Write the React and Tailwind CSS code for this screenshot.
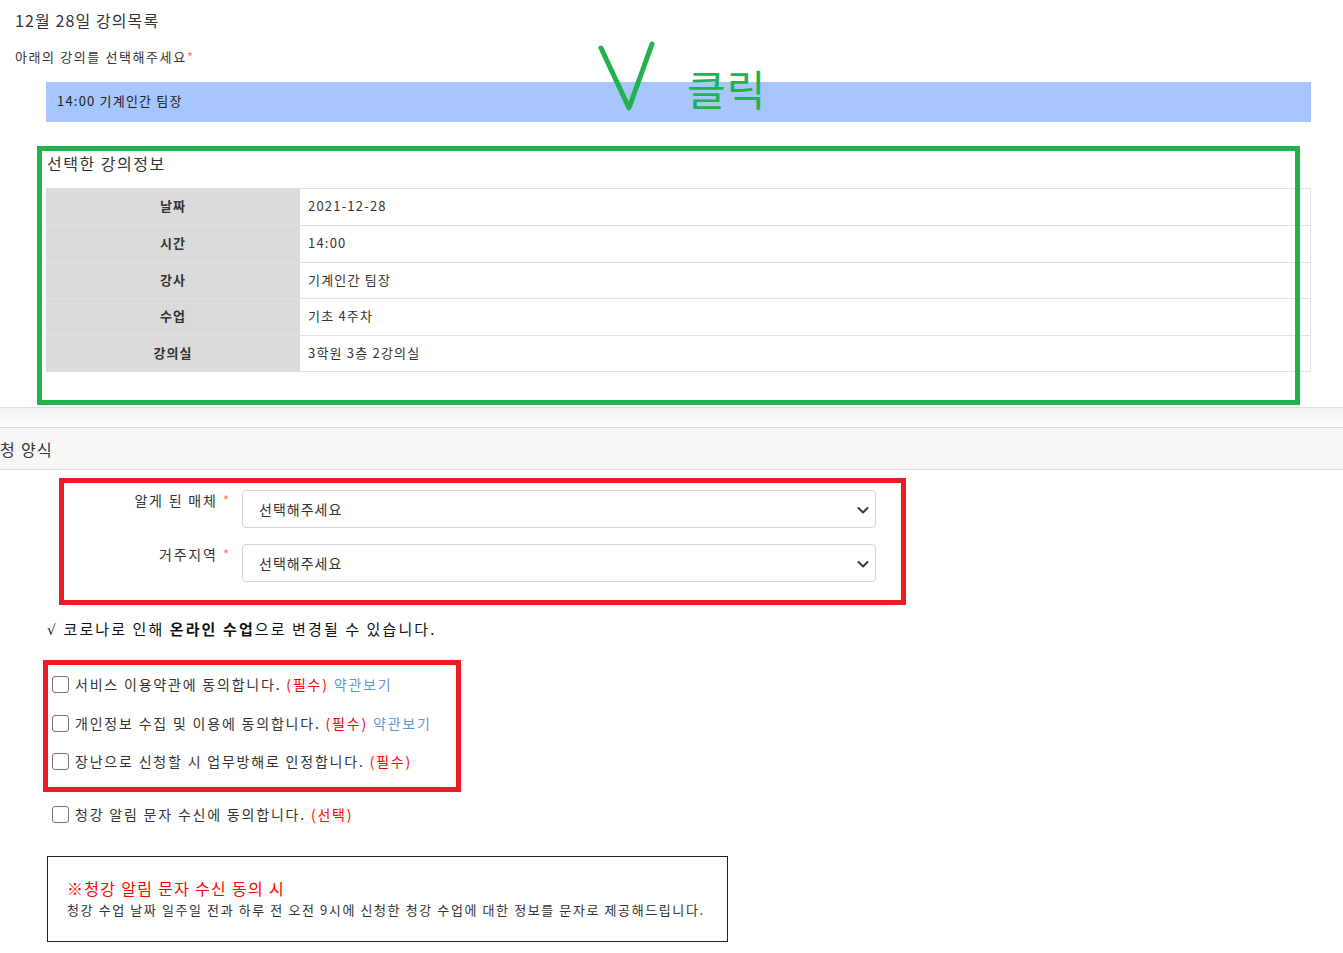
import React from "react";

const F = "font-['Noto_Sans_CJK_KR','Noto_Sans',sans-serif]";

function Chevron() {
  return (
    <svg width="12" height="9" viewBox="0 0 12 9" className="absolute right-[6px] top-[15px]">
      <path d="M1.5 2l4.5 4.5 4.5-4.5" fill="none" stroke="#343a40" strokeWidth="2" strokeLinecap="round" strokeLinejoin="round" />
    </svg>
  );
}

function SelectRow({ label, className }) {
  return (
    <div className={`flex ${className}`}>
      <div className="w-[231px] text-right text-[14px] leading-[20px] tracking-[1.8px] text-[#333]">
        {label} <span className="text-[#f77]">*</span>
      </div>
      <div className="ml-[11px] relative w-[634px] h-[38px] rounded-[4px] border border-[#ced4da] bg-white flex items-center pl-[16px] text-[14px] tracking-[1px] text-[#333]">
        선택해주세요
        <Chevron />
      </div>
    </div>
  );
}

function Check({ children, className }) {
  return (
    <div className={`flex items-center pl-[52px] h-[20px] text-[14px] leading-[20px] tracking-[1.8px] text-[#333] ${className}`}>
      <span className="w-[17px] h-[17px] rounded-[3px] border border-[#767676] bg-white shrink-0" />
      <span className="ml-[6px] whitespace-nowrap">{children}</span>
    </div>
  );
}

const rows = [
  ["날짜", "2021-12-28", "h-[37px]"],
  ["시간", "14:00", "h-[37px]"],
  ["강사", "기계인간 팀장", "h-[36px]"],
  ["수업", "기초 4주차", "h-[37px]"],
  ["강의실", "3학원 3층 2강의실", "h-[36px]"],
];

export default function App() {
  return (
    <div className={`relative w-[1343px] h-[953px] overflow-hidden bg-white text-[#333] ${F}`}>
      <div className="pt-[11px] pl-[15px] text-[16px] leading-[18px] tracking-[1.1px]">12월 28일 강의목록</div>
      <div className="mt-[20px] pl-[15px] text-[13px] leading-[16px] tracking-[1.6px]">
        아래의 강의를 선택해주세요<span className="text-[#f77]">*</span>
      </div>
      <div className="mt-[17px] ml-[46px] w-[1265px] h-[40px] bg-[#a7c6fd] flex items-center pl-[11px] pb-[2px] text-[13px] tracking-[1.2px] text-[#222]">
        14:00 기계인간 팀장
      </div>

      <div className="mt-[31px] pl-[47px] text-[16px] leading-[20px] tracking-[1.5px]">선택한 강의정보</div>
      <div className="mt-[15px] ml-[46px] w-[1265px] border-t border-r border-[#dee2e6] text-[13px]">
        {rows.map(([k, v, h]) => (
          <div key={k} className={`flex ${h} border-b border-[#dee2e6]`}>
            <div className="w-[254px] bg-[#dbdbdb] flex items-center justify-center pb-[2px] font-bold text-[#333] tracking-[1px]">{k}</div>
            <div className="flex-1 flex items-center pl-[8px] pb-[2px] text-[#333] tracking-[1.2px]">{v}</div>
          </div>
        ))}
      </div>

      <div className="mt-[35px] border-t border-[#dedede]" />
      <div className="h-[19px] bg-gradient-to-b from-[#f2f2f2] to-[#fefefe]" />
      <div className="h-[43px] border-t border-b border-[#dcdcdc] bg-[#f7f7f7] flex items-center text-[16px] leading-[20px] tracking-[1.3px]">
        청 양식
      </div>

      <SelectRow label="알게 된 매체" className="mt-[20px]" />
      <SelectRow label="거주지역" className="mt-[16px]" />

      <div className="mt-[37px] pl-[47px] text-[15px] leading-[20px] tracking-[2.1px] text-[#111]">
        <span className="font-['DejaVu_Sans',sans-serif] text-[14px]">√</span> 코로나로 인해 <b>온라인 수업</b>으로 변경될 수 있습니다.
      </div>

      <Check className="mt-[34px]">
        서비스 이용약관에 동의합니다. <span className="text-[#f00]">(필수)</span> <span className="text-[#5f97d6]">약관보기</span>
      </Check>
      <Check className="mt-[19px]">
        개인정보 수집 및 이용에 동의합니다. <span className="text-[#f00]">(필수)</span> <span className="text-[#5f97d6]">약관보기</span>
      </Check>
      <Check className="mt-[18px]">
        장난으로 신청할 시 업무방해로 인정합니다. <span className="text-[#f00]">(필수)</span>
      </Check>
      <Check className="mt-[33px]">
        청강 알림 문자 수신에 동의합니다. <span className="text-[#f00]">(선택)</span>
      </Check>

      <div className="mt-[32px] ml-[47px] w-[681px] h-[86px] border border-[#222] pl-[19px] pt-[21px]">
        <div className="text-[16px] leading-[20px] tracking-[1.3px] text-[#f00]">※청강 알림 문자 수신 동의 시</div>
        <div className="mt-[4px] text-[13px] leading-[16px] tracking-[1.6px] text-[#333] whitespace-nowrap">
          청강 수업 날짜 일주일 전과 하루 전 오전 9시에 신청한 청강 수업에 대한 정보를 문자로 제공해드립니다.
        </div>
      </div>

      {/* annotations */}
      <svg className="absolute left-[595px] top-[38px]" width="66" height="78" viewBox="0 0 66 78">
        <polyline points="6,10 34,70 57,6" fill="none" stroke="#22b14c" strokeWidth="5" strokeLinecap="round" strokeLinejoin="round" />
      </svg>
      <div className="absolute left-[687px] top-[60px] text-[42px] leading-[56px] tracking-[1px] text-[#22b14c]">클릭</div>
      <div className="absolute left-[37px] top-[146px] w-[1263px] h-[259px] border-[5px] border-[#22b14c]" />
      <div className="absolute left-[59px] top-[478px] w-[847px] h-[127px] border-[5px] border-[#ed1c24]" />
      <div className="absolute left-[43px] top-[660px] w-[418px] h-[132px] border-[5px] border-[#ed1c24]" />
    </div>
  );
}
